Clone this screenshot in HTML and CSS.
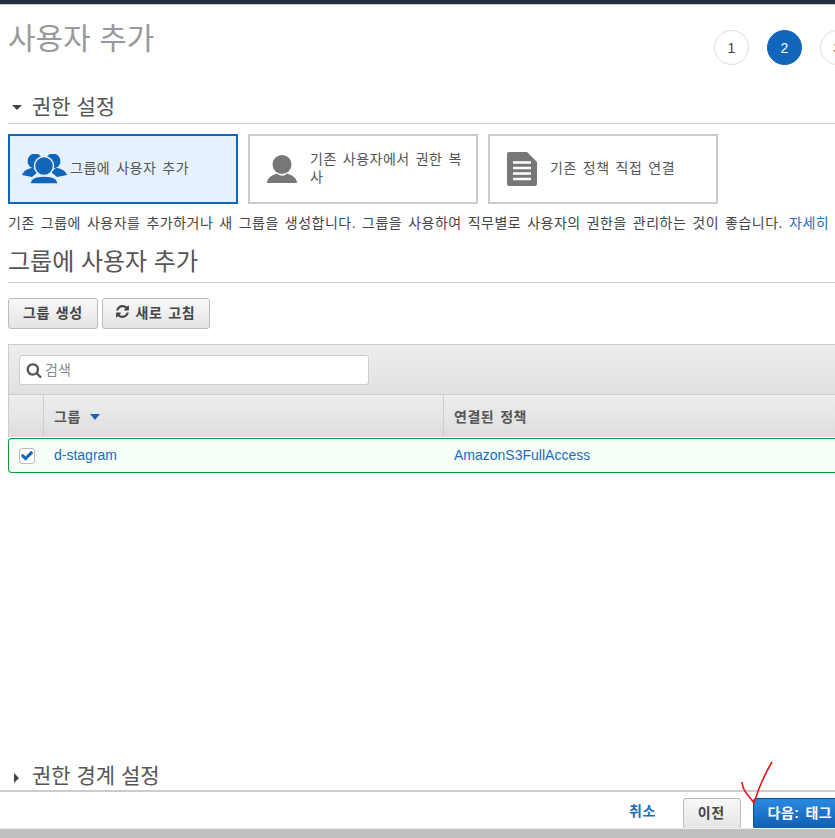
FILE: index.html
```html
<!DOCTYPE html>
<html lang="ko">
<head>
  <meta charset="UTF-8" />
  <meta name="viewport" content="width=device-width, initial-scale=1.0" />
  <title>사용자 추가</title>
  <link rel="stylesheet" href="styles.css">
</head>
<body>
  <div class="top-bar"></div>

  <div class="main">
    <div class="page-head">
      <h1 class="page-title">사용자 추가</h1>
      <div class="steps">
        <span class="step">1</span>
        <span class="step active">2</span>
        <span class="step">3</span>
      </div>
    </div>

    <h2 class="section-title"><span class="caret-down"></span>권한 설정</h2>

    <div class="tiles">
      <div class="tile selected">
        <svg class="tile-icon-group" viewBox="0 0 46 30" width="46" height="30">
          <g fill="#1166bb">
            <circle cx="13" cy="7" r="7.5"/>
            <circle cx="31" cy="7" r="7.5"/>
            <path d="M0 21 C2 16 7 14 11 14 L16 18 L10 23 Z"/>
            <path d="M45 21 C43 16 38 14 34 14 L29 18 L35 23 Z"/>
          </g>
          <circle cx="22" cy="12" r="9.5" fill="#1166bb" stroke="#e5f1fc" stroke-width="1.5"/>
          <path d="M8 30 C8 25 12 22 22 22 C32 22 36 25 36 30 Z" fill="#1166bb" stroke="#e5f1fc" stroke-width="1.5"/>
        </svg>
        <span>그룹에 사용자 추가</span>
      </div>
      <div class="tile">
        <svg class="tile-icon" viewBox="0 0 30 28" width="30" height="28">
          <circle cx="15" cy="9.5" r="9.5" fill="#777"/>
          <path d="M0 28 C0 23 5 20 10 18.5 C13 21.5 17 21.5 20 18.5 C25 20 30 23 30 28 Z" fill="#777"/>
        </svg>
        <span>기존 사용자에서 권한 복사</span>
      </div>
      <div class="tile">
        <svg class="tile-icon" viewBox="0 0 30 34" width="30" height="34">
          <path d="M2 0 H20 L30 10 V32 Q30 34 28 34 H2 Q0 34 0 32 V2 Q0 0 2 0 Z" fill="#777"/>
          <path d="M6 10.5 H24 M6 16 H24 M6 21.5 H24 M6 27 H24" stroke="#fff" stroke-width="2.4"/>
        </svg>
        <span>기존 정책 직접 연결</span>
      </div>
    </div>

    <p class="tile-desc">기존 그룹에 사용자를 추가하거나 새 그룹을 생성합니다. 그룹을 사용하여 직무별로 사용자의 권한을 관리하는 것이 좋습니다. <a href="#">자세히</a></p>

    <h3 class="sub-title">그룹에 사용자 추가</h3>

    <div class="actions">
      <button class="btn">그룹 생성</button>
      <button class="btn btn-icon">
        <svg viewBox="0 0 1792 1792" width="15" height="15">
          <path fill="#444" d="M1639 1056q0 5-1 7-64 268-268 434.5t-478 166.5q-146 0-282.5-55t-243.5-157l-129 129q-19 19-45 19t-45-19-19-45v-448q0-26 19-45t45-19h448q26 0 45 19t19 45-19 45l-137 137q71 66 161 102t187 36q134 0 250-65t186-179q11-17 53-117 8-23 30-23h192q13 0 22.5 9.5t9.5 22.5zm25-800v448q0 26-19 45t-45 19h-448q-26 0-45-19t-19-45 19-45l138-138q-148-137-349-137-134 0-250 65t-186 179q-11 17-53 117-8 23-30 23h-199q-13 0-22.5-9.5t-9.5-22.5v-7q65-268 270-434.5t480-166.5q146 0 284 55.5t245 156.5l130-129q19-19 45-19t45 19 19 45z"/>
        </svg>
        새로 고침
      </button>
    </div>

    <div class="table-wrap">
      <div class="toolbar">
        <div class="search">
          <svg viewBox="0 0 1792 1792" width="16" height="16">
            <path fill="#555" d="M1216 832q0-185-131.5-316.5t-316.5-131.5-316.5 131.5-131.5 316.5 131.5 316.5 316.5 131.5 316.5-131.5 131.5-316.5zm512 832q0 52-38 90t-90 38q-54 0-90-38l-343-342q-179 124-399 124-143 0-273.5-55.5t-225-150-150-225-55.5-273.5 55.5-273.5 150-225 225-150 273.5-55.5 273.5 55.5 225 150 150 225 55.5 273.5q0 220-124 399l343 343q37 37 37 90z"/>
          </svg>
          <span>검색</span>
        </div>
      </div>
      <div class="head-row">
        <div class="cell-check"></div>
        <div class="cell-name">그룹 <span class="sort-caret"></span></div>
        <div class="cell-policy">연결된 정책</div>
      </div>
      <div class="data-row">
        <div class="cell-check">
          <span class="checkbox">
            <svg viewBox="0 0 1792 1792" width="15" height="15"><path fill="#1166bb" d="M1671 566q0 40-28 68l-724 724-136 136q-28 28-68 28t-68-28l-136-136-362-362q-28-28-28-68t28-68l136-136q28-28 68-28t68 28l294 295 656-657q28-28 68-28t68 28l136 136q28 28 28 68z"/></svg>
          </span>
        </div>
        <div class="cell-name"><a href="#">d-stagram</a></div>
        <div class="cell-policy"><a href="#">AmazonS3FullAccess</a></div>
      </div>
    </div>

    <h2 class="section-title closed"><span class="caret-right"></span>권한 경계 설정</h2>
  </div>

  <div class="footer">
    <a class="cancel" href="#">취소</a>
    <button class="btn">이전</button>
    <button class="btn primary">다음: 태그</button>
  </div>
  <div class="bottom-band"></div>

  <!-- 빨간 손글씨 체크 표시 -->
  <svg class="red-check" viewBox="0 0 40 50" width="40" height="50">
    <path d="M2 10 C3 20 8 22 14 31 C18 18 24 3 32 -10" fill="none" stroke="#e8141c" stroke-width="1.6"/>
  </svg>
</body>
</html>
```

FILE: styles.css
```css
html, body {
  height: 100%;
}
body {
  margin: 0;
  width: 835px;
  height: 838px;
  overflow: hidden;
  position: relative;
  font-family: "Liberation Sans", "Noto Sans CJK KR", sans-serif;
  font-size: 14px;
  letter-spacing: 0.5px;
  word-spacing: 1.6px;
  color: #444;
  background: #fff;
  display: flex;
  flex-direction: column;
}
a {
  color: #1a6cc0;
  text-decoration: none;
}
.top-bar {
  height: 4px;
  background: #232f3e;
  border-bottom: 1px solid #ccc;
  flex-shrink: 0;
}
.main {
  flex: 1;
  width: 900px;
  padding-left: 8px;
  box-sizing: border-box;
  display: flex;
  flex-direction: column;
}
.page-head {
  display: flex;
  justify-content: space-between;
  height: 85px;
}
.page-title {
  margin: 13px 0 0;
  font-size: 30px;
  font-weight: normal;
  line-height: 42px;
  letter-spacing: 0;
  word-spacing: 0;
  color: #999;
}
.steps {
  display: flex;
  gap: 18px;
  margin: 25px 45px 0 0;
}
.step {
  width: 33px;
  height: 33px;
  border: 1px solid #ddd;
  border-radius: 50%;
  display: flex;
  align-items: center;
  justify-content: center;
  letter-spacing: 0;
  color: #444;
}
.step.active {
  background: #1166bb;
  border-color: #1166bb;
  color: #fff;
}
.section-title {
  margin: 0;
  font-size: 21px;
  font-weight: normal;
  line-height: 28px;
  height: 34px;
  box-sizing: border-box;
  letter-spacing: 0;
  word-spacing: 0;
  border-bottom: 1px solid #ccc;
  display: flex;
  align-items: center;
  color: #555;
}
.section-title.closed {
  margin-top: auto;
  border-bottom: none;
  height: 28px;
}
.caret-down {
  width: 0;
  height: 0;
  margin: 2px 10px 0 4px;
  border-left: 5px solid transparent;
  border-right: 5px solid transparent;
  border-top: 5px solid #444;
}
.caret-right {
  width: 0;
  height: 0;
  margin: 4px 13px 0 6px;
  border-top: 5px solid transparent;
  border-bottom: 5px solid transparent;
  border-left: 5px solid #444;
}
.tiles {
  display: flex;
  gap: 10px;
  margin-top: 10px;
}
.tile {
  width: 230px;
  height: 70px;
  box-sizing: border-box;
  border: 2px solid #ccc;
  padding: 0 12px 0 17px;
  display: flex;
  align-items: center;
  gap: 13px;
  line-height: 18px;
  color: #555;
}
.tile span {
  padding-bottom: 2px;
}
.tile.selected {
  background: #e5f1fc;
  border-color: #1166bb;
  padding: 0 12px;
  gap: 2px;
}
.tile-icon-group, .tile-icon {
  flex-shrink: 0;
}
.tile-desc {
  margin: 9px 0 0;
  line-height: 20px;
  white-space: nowrap;
  color: #444;
}
.sub-title {
  margin: 10px 0 0;
  height: 40px;
  box-sizing: border-box;
  font-size: 24px;
  line-height: 38px;
  font-weight: normal;
  letter-spacing: 0;
  word-spacing: 0;
  border-bottom: 1px solid #ccc;
  color: #555;
}
.actions {
  display: flex;
  gap: 4px;
  margin-top: 15px;
}
.btn {
  height: 31px;
  padding: 0 14px 4px 14px;
  border: 1px solid #bbb;
  border-radius: 3px;
  background: linear-gradient(#f8f8f8, #e4e4e4);
  font-family: inherit;
  font-size: 14px;
  letter-spacing: inherit;
  word-spacing: inherit;
  font-weight: bold;
  color: #444;
  display: flex;
  align-items: center;
  gap: 6px;
}
.btn-icon {
  padding-left: 12px;
}
.table-wrap {
  margin-top: 15px;
}
.toolbar {
  height: 51px;
  box-sizing: border-box;
  border-top: 1px solid #ccc;
  border-left: 1px solid #ccc;
  border-bottom: 1px solid #ccc;
  background: linear-gradient(#eee, #e0e0e0);
  padding: 10px 10px 0;
}
.search {
  width: 350px;
  height: 30px;
  box-sizing: border-box;
  background: #fff;
  border: 1px solid #ccc;
  border-radius: 3px;
  padding: 0 6px;
  display: flex;
  align-items: center;
  gap: 3px;
  letter-spacing: 0;
  color: #888;
}
.search span {
  padding-bottom: 2px;
}
.head-row {
  height: 42px;
  display: flex;
  align-items: stretch;
  border-left: 1px solid #ccc;
  box-sizing: border-box;
  background: linear-gradient(#eee, #ddd);
  font-weight: bold;
  color: #555;
}
.data-row {
  height: 35px;
  box-sizing: border-box;
  display: flex;
  align-items: stretch;
  background: #f5fff8;
  border: 1px solid #0a9a3a;
  border-right: none;
  border-radius: 4px 0 0 4px;
  margin-top: 1px;
  letter-spacing: 0;
  word-spacing: 0;
}
.cell-check {
  width: 35px;
  box-sizing: border-box;
  flex-shrink: 0;
  display: flex;
  align-items: center;
  justify-content: center;
}
.head-row .cell-check {
  border-right: 1px solid #ccc;
}
.cell-name, .cell-policy {
  padding: 0 0 1px 10px;
  display: flex;
  align-items: center;
  gap: 9px;
}
.cell-name {
  width: 400px;
  box-sizing: border-box;
}
.head-row .cell-name {
  border-right: 1px solid #ccc;
}
.sort-caret {
  width: 0;
  height: 0;
  border-left: 5px solid transparent;
  border-right: 5px solid transparent;
  border-top: 6px solid #1166bb;
  margin-top: 2px;
}
.checkbox {
  width: 14px;
  height: 14px;
  border: 1px solid #bbb;
  border-radius: 3px;
  background: #fff;
  display: flex;
  align-items: center;
  justify-content: center;
}
.footer {
  height: 38px;
  flex-shrink: 0;
  width: 900px;
  box-sizing: border-box;
  border-top: 2px solid #ccc;
  display: flex;
  align-items: flex-end;
  background: #fff;
}
.footer .cancel {
  margin-left: 629px;
  margin-right: 27px;
  font-weight: bold;
  height: 29px;
  line-height: 25px;
}
.footer .btn {
  padding-right: 15px;
  margin-bottom: -1px;
}
.footer .btn.primary {
  margin-left: 12px;
  background: linear-gradient(#2a8ae0, #0f5fb4);
  border-color: #0b4f96;
  color: #fff;
  white-space: nowrap;
}
.bottom-band {
  height: 10px;
  flex-shrink: 0;
  border-top: 1px solid #eee;
  box-sizing: border-box;
  background: #c0c0c0;
  position: relative;
}
.red-check {
  position: absolute;
  left: 740px;
  top: 772px;
  overflow: visible;
}
```
